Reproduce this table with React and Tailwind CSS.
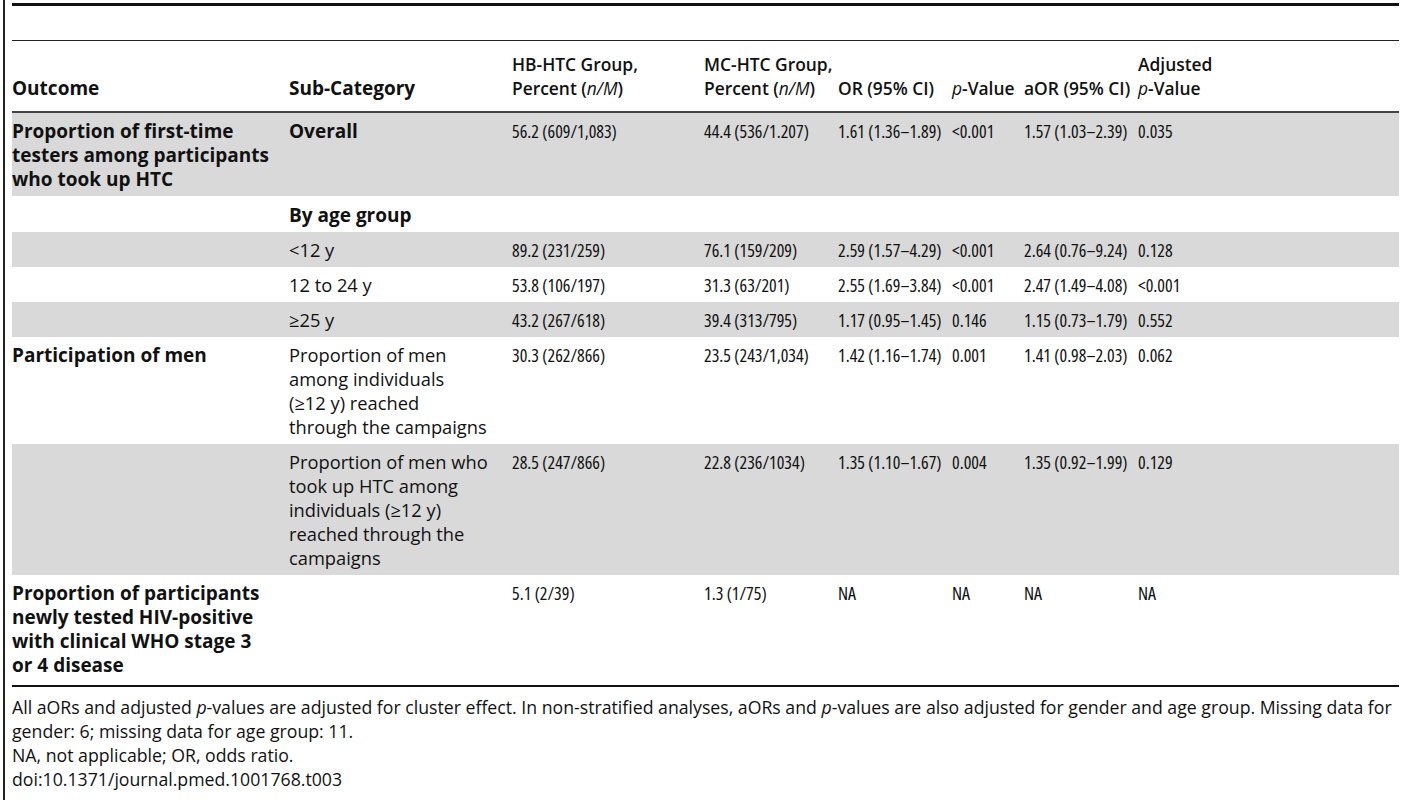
import React from "react";

const cols = "grid grid-cols-[277px_223px_192px_134px_114px_72px_114px_261px]";
const reg = "font-['Open_Sans'] text-[18.3px]";
const num = "font-['Open_Sans'] [font-stretch:82%] text-[18px]";
const foot = "font-['Open_Sans'] text-[17.7px]";
const bold = "font-['Open_Sans'] font-bold text-[19px]";
const head = "font-['Open_Sans'] font-semibold text-[17.4px] whitespace-nowrap";

const LT = () => <span>&lt;</span>;

const rows = [
  {
    shade: true,
    outcome: ["Proportion of first-time", "testers among participants", "who took up HTC"],
    sub: "Overall",
    subBold: true,
    cells: ["56.2 (609/1,083)", "44.4 (536/1.207)", "1.61 (1.36–1.89)", <><LT />0.001</>, "1.57 (1.03–2.39)", "0.035"],
  },
  { shade: false, outcome: null, sub: "By age group", subBold: true, cells: ["", "", "", "", "", ""] },
  {
    shade: true,
    outcome: null,
    sub: <><LT />12 y</>,
    cells: ["89.2 (231/259)", "76.1 (159/209)", "2.59 (1.57–4.29)", <><LT />0.001</>, "2.64 (0.76–9.24)", "0.128"],
  },
  {
    shade: false,
    outcome: null,
    sub: "12 to 24 y",
    cells: ["53.8 (106/197)", "31.3 (63/201)", "2.55 (1.69–3.84)", <><LT />0.001</>, "2.47 (1.49–4.08)", <><LT />0.001</>],
  },
  {
    shade: true,
    outcome: null,
    sub: "≥25 y",
    cells: ["43.2 (267/618)", "39.4 (313/795)", "1.17 (0.95–1.45)", "0.146", "1.15 (0.73–1.79)", "0.552"],
  },
  {
    shade: false,
    outcome: ["Participation of men"],
    sub: ["Proportion of men", "among individuals", "(≥12 y) reached", "through the campaigns"],
    cells: ["30.3 (262/866)", "23.5 (243/1,034)", "1.42 (1.16–1.74)", "0.001", "1.41 (0.98–2.03)", "0.062"],
  },
  {
    shade: true,
    outcome: null,
    sub: ["Proportion of men who", "took up HTC among", "individuals (≥12 y)", "reached through the", "campaigns"],
    cells: ["28.5 (247/866)", "22.8 (236/1034)", "1.35 (1.10–1.67)", "0.004", "1.35 (0.92–1.99)", "0.129"],
  },
  {
    shade: false,
    last: true,
    outcome: ["Proportion of participants", "newly tested HIV-positive", "with clinical WHO stage 3", "or 4 disease"],
    sub: "",
    cells: ["5.1 (2/39)", "1.3 (1/75)", "NA", "NA", "NA", "NA"],
  },
];

function Lines({ value }) {
  if (Array.isArray(value)) {
    return value.map((l, i) => (
      <div key={i} className="whitespace-nowrap">
        {l}
      </div>
    ));
  }
  return <div className="whitespace-nowrap">{value}</div>;
}

export default function App() {
  return (
    <div className="min-h-[800px] bg-white text-[#111]">
      <div className="ml-[3px] min-h-[800px] border-l-2 border-[#222] pl-[7px] pt-[3px]">
        <div className="w-[1387px] border-t-[3px] border-[#111] h-[37px]" />

        {/* header */}
        <div className={`${cols} w-[1387px] items-end border-t border-[#222] border-b-2 border-b-[#444] pt-[11px] pb-[11px] leading-[24px]`}>
          <div className={bold}>Outcome</div>
          <div className={bold}>Sub-Category</div>
          <div className={head}>
            HB-HTC Group,
            <br />
            Percent (<i className="font-normal">n/M</i>)
          </div>
          <div className={head}>
            MC-HTC Group,
            <br />
            Percent (<i className="font-normal">n/M</i>)
          </div>
          <div className={head}>OR (95% CI)</div>
          <div className={head}>
            <i className="font-normal">p</i>-Value
          </div>
          <div className={head}>aOR (95% CI)</div>
          <div className={head}>
            Adjusted
            <br />
            <i className="font-normal">p</i>-Value
          </div>
        </div>

        {/* body */}
        {rows.map((r, i) => (
          <div
            key={i}
            className={`${cols} w-[1387px] items-start leading-[24px] ${i === 1 ? "pt-[7px]" : "pt-[6px]"} ${
              r.shade ? "bg-[#d9d9d9]" : "bg-white"
            } ${r.last ? "pb-[8px] border-b-2 border-[#111]" : "pb-[5px]"}`}
          >
            <div className={bold}>{r.outcome && <Lines value={r.outcome} />}</div>
            <div className={r.subBold ? bold : reg}>
              <Lines value={r.sub} />
            </div>
            {r.cells.map((c, j) => (
              <div key={j} className={num}>
                <Lines value={c} />
              </div>
            ))}
          </div>
        ))}

        {/* footnotes */}
        <div className={`${foot} w-[1390px] pt-[8px] leading-[24px]`}>
          <div className="whitespace-nowrap">
            All aORs and adjusted <i>p</i>-values are adjusted for cluster effect. In non-stratified analyses, aORs and <i>p</i>-values are also adjusted for gender and age group. Missing data for
          </div>
          <div>gender: 6; missing data for age group: 11.</div>
          <div>NA, not applicable; OR, odds ratio.</div>
          <div>doi:10.1371/journal.pmed.1001768.t003</div>
        </div>
      </div>
    </div>
  );
}
